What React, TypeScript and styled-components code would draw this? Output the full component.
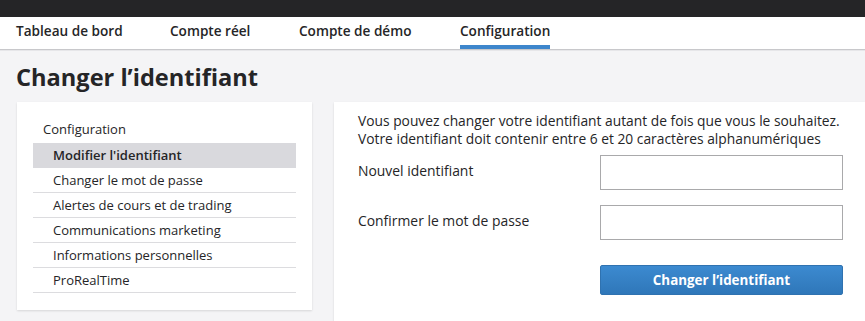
import React from 'react'
import styled, { createGlobalStyle } from 'styled-components';

const GlobalStyle = createGlobalStyle`
    body {
        margin: 0;
        background: #f4f4f6;
        font-family: "Open Sans", "Noto Sans", sans-serif;
        color: #252527;
    }
    * { box-sizing: border-box; }
`;

const TopBar = styled.div`
    height: 17px;
    background: #252527;
`;

const Nav = styled.nav`
    height: 33px;
    background: #fff;
    border-bottom: 1px solid #c8c8cb;
    box-shadow: 0 1px 0 #e6e6e9;
    display: flex;
    padding-left: 16px;
`;

const NavItem = styled.div<{ $width: number; $active?: boolean }>`
    flex: none;
    width: ${p => p.$width}px;
    height: 32px;
    font-size: 13.6px;
    font-weight: 600;
    line-height: 28px;
    white-space: nowrap;
    text-align: ${p => (p.$active ? 'center' : 'left')};
    border-bottom: 4px solid ${p => (p.$active ? '#3d86cc' : 'transparent')};
`;

const Title = styled.h1`
    margin: 0;
    padding: 14px 16px 11px;
    font-size: 23.6px;
    font-weight: 700;
    line-height: 27px;
`;

const Body = styled.div`
    display: flex;
    align-items: flex-start;
    gap: 22px;
    padding-left: 17px;
`;

const Card = styled.div`
    background: #fff;
    box-shadow: 0 1px 2px rgba(0, 0, 0, 0.12);
`;

const SideCard = styled(Card)`
    width: 295px;
    padding: 17px 16px 17px 16px;
`;

const GroupLabel = styled.div`
    font-size: 13px;
    line-height: 20px;
    padding-left: 10px;
    margin-bottom: 4px;
`;

const MenuList = styled.ul`
    list-style: none;
    margin: 0;
    padding: 0;
`;

const MenuItem = styled.li<{ $active?: boolean }>`
    height: 25px;
    line-height: 24px;
    padding-left: 20px;
    font-size: 13px;
    font-weight: ${p => (p.$active ? 600 : 400)};
    background: ${p => (p.$active ? '#d9d9dd' : 'transparent')};
    border-bottom: 1px solid ${p => (p.$active ? '#d9d9dd' : '#dcdcdf')};
`;

const MainCard = styled(Card)`
    flex: 1;
    height: 230px;
    padding: 10px 22px 0 24px;
`;

const Intro = styled.p`
    margin: 0 0 7px;
    font-size: 13.8px;
    line-height: 18px;
    white-space: nowrap;
`;

const FieldRow = styled.div<{ $gap: number }>`
    display: grid;
    grid-template-columns: 242px 243px;
    align-items: start;
    margin-bottom: ${p => p.$gap}px;
`;

const Label = styled.label`
    font-size: 13.9px;
    line-height: 20px;
    padding-top: 6px;
`;

const Input = styled.input`
    width: 243px;
    height: 35px;
    border: 1px solid #a9a9ab;
    background: #fff;
`;

const Button = styled.button`
    grid-column: 2;
    height: 30px;
    border: 1px solid #2f72b0;
    border-radius: 2px;
    background: linear-gradient(#3c8ad0, #2f77b9);
    color: #fff;
    font-family: inherit;
    font-size: 13.4px;
    font-weight: 700;
`;

const menu = [
    'Modifier l\'identifiant',
    'Changer le mot de passe',
    'Alertes de cours et de trading',
    'Communications marketing',
    'Informations personnelles',
    'ProRealTime',
];

const tabs: [string, number][] = [
    ['Tableau de bord', 154],
    ['Compte réel', 129],
    ['Compte de démo', 161],
    ['Configuration', 90],
];

export default function App() {
    return (
        <>
            <GlobalStyle />
            <TopBar />
            <Nav>
                {tabs.map(([t, w]) => (
                    <NavItem key={t} $width={w} $active={t === 'Configuration'}>{t}</NavItem>
                ))}
            </Nav>
            <Title>Changer l’identifiant</Title>
            <Body>
                <SideCard>
                    <GroupLabel>Configuration</GroupLabel>
                    <MenuList>
                        {menu.map((m, i) => (
                            <MenuItem key={m} $active={i === 0}>{m}</MenuItem>
                        ))}
                    </MenuList>
                </SideCard>
                <MainCard>
                    <Intro>
                        Vous pouvez changer votre identifiant autant de fois que vous le souhaitez.<br />
                        Votre identifiant doit contenir entre 6 et 20 caractères alphanumériques
                    </Intro>
                    <FieldRow $gap={15}>
                        <Label>Nouvel identifiant</Label>
                        <Input type="text" />
                    </FieldRow>
                    <FieldRow $gap={25}>
                        <Label>Confirmer le mot de passe</Label>
                        <Input type="password" />
                    </FieldRow>
                    <FieldRow $gap={0}>
                        <Button>Changer l’identifiant</Button>
                    </FieldRow>
                </MainCard>
            </Body>
        </>
    )
}
